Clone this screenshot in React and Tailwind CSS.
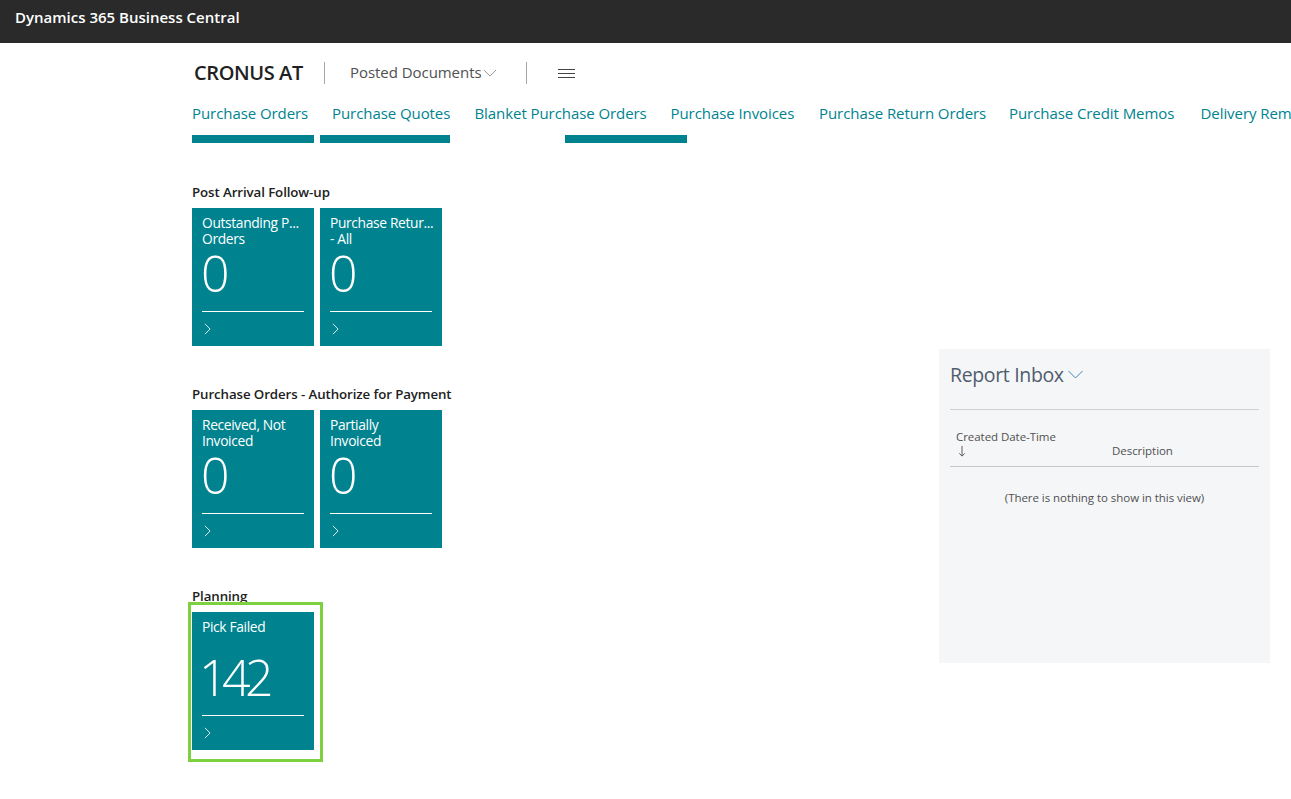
const FONT = "font-['Open_Sans','Noto_Sans',sans-serif]";

function Chevron({ className }) {
  return (
    <svg viewBox="0 0 16 9" className={className} fill="none" stroke="currentColor" strokeWidth="1">
      <path d="M1 1l7 7 7-7" />
    </svg>
  );
}

function Tile({ line1, line2, value, narrowValue }) {
  return (
    <div className="w-[122px] h-[138px] bg-[#00838f] text-white px-[10px] pt-[7px] flex flex-col">
      <div className="h-[33px] text-[13.8px] leading-[16px] tracking-[-0.35px] whitespace-nowrap">
        <div>{line1}</div>
        {line2 && <div>{line2}</div>}
      </div>
      <div className={`h-[63px] text-[50px] leading-[50px] font-light ${narrowValue ? "-ml-[3px] tracking-[-5.5px]" : "-ml-[1px] tracking-[-1px]"}`}>
        {value}
      </div>
      <div className="border-t border-white h-0" />
      <svg viewBox="0 0 8 14" className="w-[7px] h-[12px] mt-[11px] ml-[2px]" fill="none" stroke="currentColor" strokeWidth="1">
        <path d="M1 1l6 6-6 6" />
      </svg>
    </div>
  );
}

function Section({ title, children, className }) {
  return (
    <section className={className}>
      <h2 className="h-[25px] text-[13.3px] leading-[18px] font-semibold tracking-[-0.1px] text-[#212121]">{title}</h2>
      <div className="flex gap-[6px]">{children}</div>
    </section>
  );
}

const tabs = [
  ["Purchase Orders", "w-[140px]"],
  ["Purchase Quotes", "w-[142.5px]"],
  ["Blanket Purchase Orders", "w-[196px]"],
  ["Purchase Invoices", "w-[148.5px]"],
  ["Purchase Return Orders", "w-[190px]"],
  ["Purchase Credit Memos", "w-[191.5px]"],
  ["Delivery Reminders", "w-[160px]"],
];

export default function App() {
  return (
    <div className={`relative w-[1291px] h-[799px] overflow-hidden bg-white ${FONT}`}>
      <header className="h-[43px] bg-[#2a2a2a] pl-[15px] pt-[7px] text-white text-[15px] leading-[20px] font-semibold">
        Dynamics 365 Business Central
      </header>

      <div className="pl-[192px]">
        <div className="h-[60px] flex items-center pl-[2px]">
          <span className="w-[130px] text-[20px] font-semibold text-[#212121] tracking-[-0.4px] leading-[58px]">CRONUS AT</span>
          <span className="w-px h-[22px] bg-[#a6a6a6]" />
          <span className="ml-[25px] text-[15px] leading-[20px] -mt-[2px] text-[#505050] tracking-[-0.05px] w-[134px]">Posted Documents</span>
          <Chevron className="w-[14px] h-[8px] text-[#8a8a8a] -ml-[1px]" />
          <span className="w-px h-[22px] bg-[#a6a6a6] ml-[29px]" />
          <span className="ml-[31px] w-[17px] flex flex-col gap-[3px]">
            <span className="h-px bg-[#444]" />
            <span className="h-px bg-[#444]" />
            <span className="h-px bg-[#444]" />
          </span>
        </div>

        <nav className="h-[32px] flex whitespace-nowrap text-[15px] leading-[20px] text-[#00838f] tracking-[-0.07px]">
          {tabs.map(([label, width]) => (
            <span key={label} className={`${width} shrink-0`}>{label}</span>
          ))}
        </nav>

        <div className="flex h-[8px]">
          <span className="w-[122px] bg-[#00838f]" />
          <span className="w-[130px] ml-[6px] bg-[#00838f]" />
          <span className="w-[122px] ml-[115px] bg-[#00838f]" />
        </div>

        <div className="flex">
          <div className="w-[747px]">
            <Section title="Post Arrival Follow-up" className="mt-[40px]">
              <Tile line1="Outstanding P..." line2="Orders" value="0" />
              <Tile line1="Purchase Retur..." line2="- All" value="0" />
            </Section>
            <Section title="Purchase Orders - Authorize for Payment" className="mt-[39px]">
              <Tile line1="Received, Not" line2="Invoiced" value="0" />
              <Tile line1="Partially" line2="Invoiced" value="0" />
            </Section>
            <Section title="Planning" className="mt-[39px]">
              <Tile line1="Pick Failed" value="142" narrowValue />
            </Section>
          </div>

          <aside className="w-[331px] h-[314px] mt-[206px] bg-[#f5f6f8] px-[11px]">
            <div className="h-[61px] flex items-center pb-[9px] border-b border-[#d0d0d0]">
              <span className="text-[19.5px] text-[#505c6d] tracking-[-0.35px]">Report Inbox</span>
              <Chevron className="w-[17px] h-[9px] text-[#3f87b8] ml-[3px]" />
            </div>
            <div className="h-[57px] flex border-b border-[#c8c8c8] text-[11.5px] leading-[14px] text-[#505050] tracking-[-0.05px]">
              <div className="w-[162px] pl-[6px] pt-[20px]">
                <div>Created Date-Time</div>
                <svg viewBox="0 0 8 12" className="w-[8px] h-[11px] ml-[2px] mt-[2px]" fill="none" stroke="currentColor" strokeWidth="1">
                  <path d="M4 0v11M1 8l3 3 3-3" />
                </svg>
              </div>
              <div className="pt-[34px]">Description</div>
            </div>
            <p className="text-center text-[11.5px] leading-[14px] text-[#505050] mt-[24px] tracking-[-0.05px]">
              (There is nothing to show in this view)
            </p>
          </aside>
        </div>
      </div>

      <div className="absolute left-[188px] top-[602px] w-[135px] h-[160px] border-[3px] border-[#7ed13e]" />
    </div>
  );
}
